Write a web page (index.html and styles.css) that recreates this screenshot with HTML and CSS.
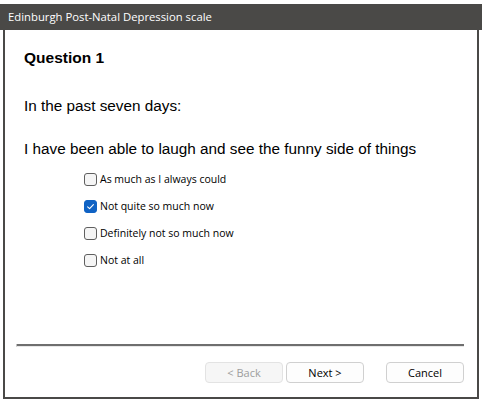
FILE: index.html
```html
<!DOCTYPE html>
<html>
<head>
<meta charset="utf-8">
<link rel="stylesheet" href="styles.css">
</head>
<body>
<div class="window">
  <div class="titlebar">Edinburgh Post-Natal Depression scale</div>
  <div class="content">
    <h1 class="qtitle">Question 1</h1>
    <p class="intro">In the past seven days:</p>
    <p class="question">I have been able to laugh and see the funny side of things</p>
    <div class="options">
      <label class="opt"><span class="box"></span>As much as I always could</label>
      <label class="opt"><span class="box checked"><svg viewBox="0 0 13 13" width="13" height="13"><path d="M3.6 6.8 L5.6 8.7 L9.4 4.6" fill="none" stroke="#fff" stroke-width="1.1" stroke-linecap="round" stroke-linejoin="round"/></svg></span>Not quite so much now</label>
      <label class="opt"><span class="box"></span>Definitely not so much now</label>
      <label class="opt"><span class="box"></span>Not at all</label>
    </div>
    <div class="spacer"></div>
    <div class="sep"></div>
    <div class="buttons">
      <button class="btn disabled">&lt; Back</button>
      <button class="btn">Next &gt;</button>
      <button class="btn cancel">Cancel</button>
    </div>
  </div>
</div>
</body>
</html>
```
FILE: styles.css
```css
html, body {
  margin: 0;
  padding: 0;
  background: #ffffff;
}
body {
  width: 482px;
  height: 404px;
  overflow: hidden;
}
.window {
  margin-top: 4px;
  width: 482px;
  height: 395px;
  display: flex;
  flex-direction: column;
}
.titlebar {
  height: 26px;
  background: #4a4947;
  color: #ffffff;
  font-family: "Open Sans", "Noto Sans", sans-serif;
  font-size: 11.3px;
  line-height: 26px;
  padding-left: 8px;
  box-sizing: border-box;
}
.content {
  flex: 1;
  margin: 0 3px 0 3px;
  border-left: 2px solid #4a4947;
  border-right: 2px solid #4a4947;
  border-bottom: 2px solid #4a4947;
  display: flex;
  flex-direction: column;
  font-family: "Liberation Sans", Arial, sans-serif;
  color: #000;
}
.qtitle {
  margin: 19px 0 0 19px;
  font-size: 15.5px;
  font-weight: bold;
  line-height: 18px;
}
.intro {
  margin: 30px 0 0 19px;
  font-size: 15.3px;
  line-height: 18px;
}
.question {
  margin: 25px 0 0 19px;
  font-size: 15.3px;
  line-height: 18px;
}
.options {
  margin: 14px 0 0 79px;
  display: flex;
  flex-direction: column;
  gap: 13px;
}
.opt {
  display: flex;
  align-items: center;
  height: 14px;
  font-family: "Open Sans", "Noto Sans", sans-serif;
  font-size: 10.5px;
  color: #000;
}
.box {
  width: 11px;
  height: 11px;
  border: 1px solid #5f5f5f;
  border-radius: 3px;
  background: #f5f5f5;
  margin-right: 3px;
  flex: none;
  position: relative;
}
.box.checked {
  background: #0f62c4;
  border-color: #0f62c4;
}
.box svg {
  position: absolute;
  left: -1px;
  top: -1px;
}
.spacer { flex: 1; }
.sep {
  margin: 0 13px 0 11px;
  height: 2px;
  background: #6f6f6f;
  border-bottom: 1px solid #e8e8e8;
  border-left: 1px solid #c0c0c0;
}
.buttons {
  display: flex;
  justify-content: flex-end;
  margin: 15px 13px 14px 0;
  height: 21px;
}
.btn {
  width: 78px;
  height: 21px;
  border: 1px solid #d0d0d0;
  border-radius: 4px;
  background: #fdfdfd;
  font-family: "Open Sans", "Noto Sans", sans-serif;
  font-size: 11px;
  color: #000;
  padding: 0;
  margin-left: 3px;
}
.btn.disabled {
  color: #9d9d9d;
  background: #f6f6f6;
  border-color: #e3e3e3;
}
.btn.cancel {
  margin-left: 22px;
}
```
